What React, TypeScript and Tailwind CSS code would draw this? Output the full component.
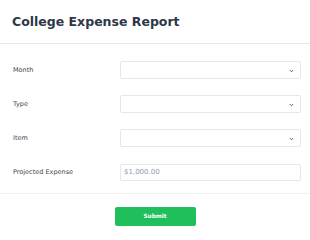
import React from "react";

const Chevron = () => (
  <svg width="5" height="4" viewBox="0 0 5 4" className="absolute right-[6px] top-[6.5px]">
    <path d="M0.8 1 L2.5 2.8 L4.2 1" fill="none" stroke="#4a5568" strokeWidth="0.9" />
  </svg>
);

const SelectRow = ({ label }: { label: string }) => (
  <div className="flex items-center h-[17.5px]">
    <div className="w-[107px] text-[6.5px] text-[#3f444d] translate-y-[1px]">{label}</div>
    <div className="relative flex-1 h-[17.5px] rounded-[2px] border border-[#e2e8f0] bg-white">
      <Chevron />
    </div>
  </div>
);

export default function App() {
  return (
    <div
      className="w-[310px] h-[240px] bg-white overflow-hidden"
      style={{ fontFamily: '"DejaVu Sans", Verdana, sans-serif' }}
    >
      <div className="h-[44px] border-b border-[#e8e8ec] px-[12px] pt-[13.5px]">
        <h1 className="text-[12.5px] leading-[16px] font-bold text-[#2d3748]">College Expense Report</h1>
      </div>
      <div className="flex flex-col gap-[16.7px] pl-[13px] pr-[9px] pt-[17px] pb-[12px] border-b border-[#f0f0f3]">
        <SelectRow label="Month" />
        <SelectRow label="Type" />
        <SelectRow label="Item" />
        <div className="flex items-center h-[17.5px]">
          <div className="w-[107px] text-[6.5px] text-[#3f444d] translate-y-[1px]">Projected Expense</div>
          <div className="flex-1 h-[17.5px] rounded-[2px] border border-[#e2e8f0] bg-white flex items-center pl-[3px] text-[7px] text-[#8a9bb0]">
            $1,000.00
          </div>
        </div>
      </div>
      <div className="flex justify-center pt-[13px]">
        <button className="w-[81px] h-[19px] rounded-[2px] bg-[#1fbf5c] text-white text-[5.8px] font-bold flex items-center justify-center">
          Submit
        </button>
      </div>
    </div>
  );
}
